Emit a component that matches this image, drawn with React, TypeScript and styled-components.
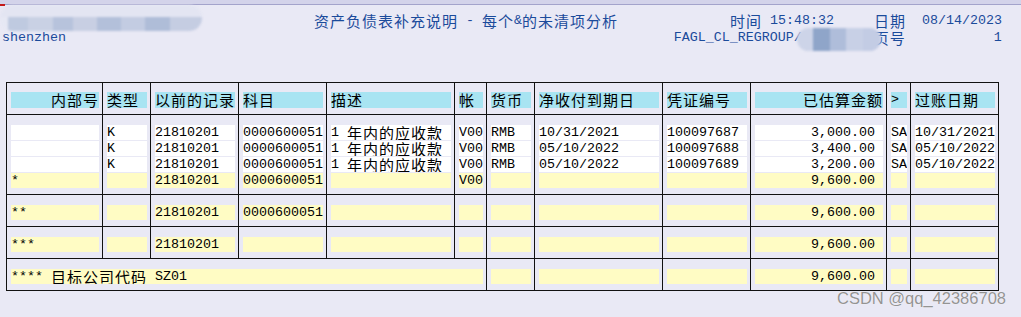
import React from 'react'
import styled, { createGlobalStyle } from 'styled-components'

const GlobalStyle = createGlobalStyle`
  body {
    margin: 0;
    background: #e9e9f5;
  }
`

const Page = styled.div`
  position: relative;
  width: 1021px;
  height: 317px;
  overflow: hidden;
  background: #e9e9f5;
  font-family: "Liberation Mono", monospace;
  font-size: 13.333px;
  color: #000;
`

const TopBar = styled.div`
  position: relative;
  height: 4px;
  background: #d3d3ea;
  border-bottom: 1px solid #a3a3cb;

  &::before {
    content: '';
    position: absolute;
    left: 0;
    top: 4px;
    width: 5px;
    height: 2px;
    background: #c41a1a;
  }
`

const Header = styled.div`
  position: relative;
  padding: 7px 0 0 2px;
  color: #1b4b9b;
  line-height: 17px;
  white-space: pre;
`

const HeaderLine = styled.div`
  height: 17px;
`

// blurred-out parts of the screenshot
const Smudge = styled.div<{ $left: number; $top: number; $w: number; $h: number; $bg: string }>`
  position: absolute;
  left: ${p => p.$left}px;
  top: ${p => p.$top}px;
  width: ${p => p.$w}px;
  height: ${p => p.$h}px;
  border-radius: ${p => p.$h / 2}px;
  background: ${p => p.$bg};
  filter: blur(1.2px);
`

// CJK glyphs take two character cells (16px) in the SAP list font
const Wide = styled.span`
  display: inline-block;
  vertical-align: top;
  font-family: "Noto Sans CJK SC", sans-serif;
  font-size: 15px;
  letter-spacing: 1px;
  line-height: inherit;
`

const Table = styled.div`
  margin: 36px 0 0 6px;
  width: 993px;
`

const Band = styled.div<{ $last?: boolean }>`
  display: grid;
  grid-template-columns: 96px 48px 88px 88px 128px 32px 48px 128px 88px 136px 24px 88px;
  border-top: 1px solid #111;
  border-right: 1px solid #111;
  border-bottom: ${p => (p.$last ? '1px solid #111' : 'none')};
`

const Cell = styled.div<{ $top: number; $span?: number }>`
  grid-column: span ${p => p.$span ?? 1};
  display: flex;
  flex-direction: column;
  gap: 1px;
  padding: ${p => p.$top}px 3px 6px 4px;
  border-left: 1px solid #111;
  min-width: 0;
`

type Tone = 'head' | 'white' | 'sum'

const tones: Record<Tone, string> = {
  head: '#a8e4f2',
  white: '#ffffff',
  sum: '#fffcc4',
}

const Field = styled.div<{ $tone: Tone; $right?: boolean; $pad?: boolean; $tall?: boolean }>`
  height: ${p => (p.$tall ? 16 : 15)}px;
  line-height: ${p => (p.$tall ? 16 : 15)}px;
  background: ${p => tones[p.$tone]};
  text-align: ${p => (p.$right ? 'right' : 'left')};
  padding-right: ${p => (p.$pad ? 8 : 0)}px;
  white-space: pre;
  overflow: hidden;
`

const Watermark = styled.div`
  position: absolute;
  right: 15px;
  top: 290px;
  font-family: "Liberation Sans", Arial, sans-serif;
  font-size: 16.5px;
  line-height: 1;
  color: #949494;
  text-shadow: 0 0 1px #ffffff;
`

const CJK = /([\u2E80-\u9FFF\uF900-\uFAFF\uFF00-\uFFEF]+)/

const mix = (text: string) =>
  text.split(CJK).map((part, i) => (CJK.test(part) ? <Wide key={i}>{part}</Wide> : part))

const line1 =
  ' '.repeat(39) +
  '资产负债表补充说明 - 每个&的未清项分析' +
  ' '.repeat(14) +
  '时间 15:48:32' +
  ' '.repeat(5) +
  '日期  08/14/2023'

const line2 =
  'shenzhen' + ' '.repeat(76) + 'FAGL_CL_REGROUP/' + ' '.repeat(9) + '页号' + ' '.repeat(11) + '1'

const columns = ['内部号', '类型', '以前的记录', '科目', '描述', '帐', '货币', '净收付到期日', '凭证编号', '已估算金额', '>', '过账日期']

const AMOUNT = 9

const items = [
  ['', 'K', '21810201', '0000600051', '1 年内的应收款', 'V00', 'RMB', '10/31/2021', '100097687', '3,000.00', 'SA', '10/31/2021'],
  ['', 'K', '21810201', '0000600051', '1 年内的应收款', 'V00', 'RMB', '05/10/2022', '100097688', '3,400.00', 'SA', '05/10/2022'],
  ['', 'K', '21810201', '0000600051', '1 年内的应收款', 'V00', 'RMB', '05/10/2022', '100097689', '3,200.00', 'SA', '05/10/2022'],
]

const subtotal = ['*', '', '21810201', '0000600051', '', 'V00', '', '', '', '9,600.00', '', '']

const totals = [
  ['**', '', '21810201', '0000600051', '', '', '', '', '', '9,600.00', '', ''],
  ['***', '', '21810201', '', '', '', '', '', '', '9,600.00', '', ''],
]

const rows: { tone: Tone; values: string[] }[] = [
  ...items.map(values => ({ tone: 'white' as Tone, values })),
  { tone: 'sum', values: subtotal },
]

const App = () => {
  return (
    <Page>
      <GlobalStyle />
      <TopBar />
      <Header>
        <HeaderLine>{mix(line1)}</HeaderLine>
        <HeaderLine>{mix(line2)}</HeaderLine>
        <Smudge
          $left={0}
          $top={0}
          $w={202}
          $h={26}
          $bg="linear-gradient(180deg, #e3e5f2 0 48%, transparent 48%), linear-gradient(90deg, #e6e8f4 0 4%, #bfcae0 4% 14%, #c9d1e4 14% 26%, #b7c3dc 26% 36%, #c8cfe3 36% 48%, #b3c0da 48% 60%, #c3cce2 60% 72%, #afbdd8 72% 84%, #c5cde2 84% 100%)"
        />
        <Smudge
          $left={797}
          $top={23}
          $w={84}
          $h={23}
          $bg="linear-gradient(90deg, #cdd4e8 0 19%, #8fa5c9 19% 39%, #afbdda 39% 58%, #c8d0e6 58% 78%, #c3cce4 78% 100%)"
        />
      </Header>

      <Table>
        <Band>
          {columns.map((title, c) => (
            <Cell key={c} $top={9}>
              <Field $tone="head" $tall $right={c === 0 || c === AMOUNT}>
                {mix(title)}
              </Field>
            </Cell>
          ))}
        </Band>

        <Band>
          {columns.map((_, c) => (
            <Cell key={c} $top={10}>
              {rows.map((row, r) => (
                <Field key={r} $tone={row.tone} $right={c === AMOUNT} $pad={c === AMOUNT}>
                  {mix(row.values[c])}
                </Field>
              ))}
            </Cell>
          ))}
        </Band>

        {totals.map((values, t) => (
          <Band key={t}>
            {values.map((value, c) => (
              <Cell key={c} $top={10}>
                <Field $tone="sum" $right={c === AMOUNT} $pad={c === AMOUNT}>
                  {mix(value)}
                </Field>
              </Cell>
            ))}
          </Band>
        ))}

        <Band $last>
          <Cell $top={10} $span={6}>
            <Field $tone="sum">{mix('**** 目标公司代码 SZ01')}</Field>
          </Cell>
          {['', '', '', '9,600.00', '', ''].map((value, i) => (
            <Cell key={i} $top={10}>
              <Field $tone="sum" $right={i === 3} $pad={i === 3}>
                {value}
              </Field>
            </Cell>
          ))}
        </Band>
      </Table>

      <Watermark>CSDN @qq_42386708</Watermark>
    </Page>
  )
}

export default App
